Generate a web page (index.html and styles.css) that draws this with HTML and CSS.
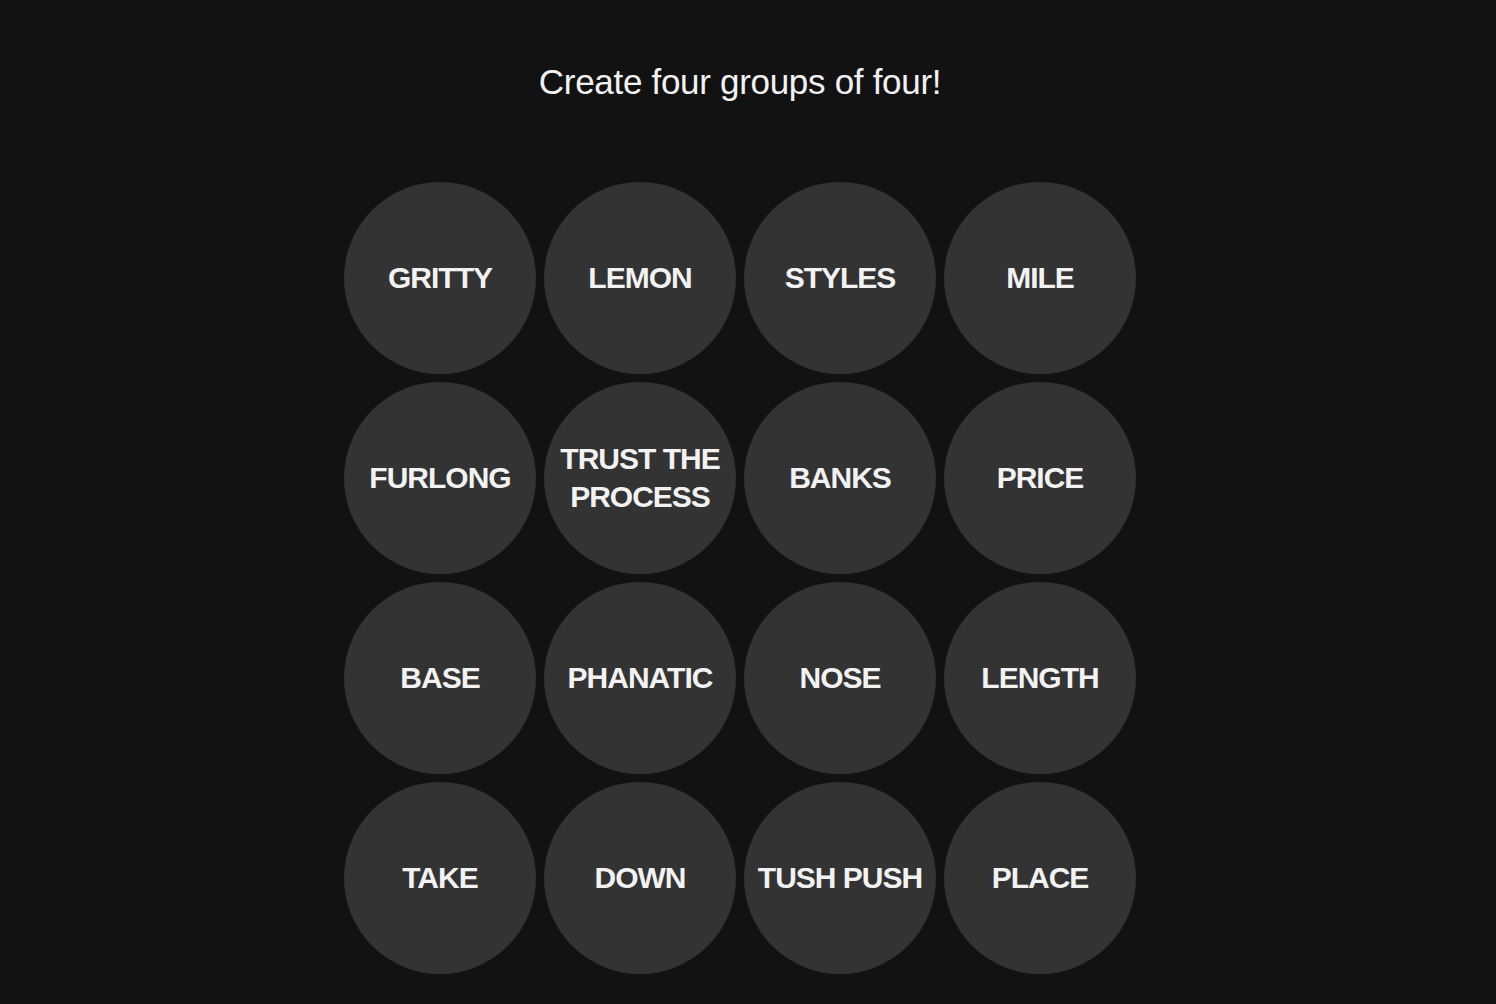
FILE: index.html
```html
<!DOCTYPE html>
<html lang="en">
<head>
    <meta charset="UTF-8">
    <meta name="viewport" content="width=device-width, initial-scale=1.0">
    <title>Connections</title>
    <link rel="stylesheet" href="styles.css">
</head>
<body>
    <main class="game">
        <h2 class="prompt">Create four groups of four!</h2>
        <div class="board">
            <button class="card">GRITTY</button>
            <button class="card">LEMON</button>
            <button class="card">STYLES</button>
            <button class="card">MILE</button>
            <button class="card">FURLONG</button>
            <button class="card">TRUST THE PROCESS</button>
            <button class="card">BANKS</button>
            <button class="card">PRICE</button>
            <button class="card">BASE</button>
            <button class="card">PHANATIC</button>
            <button class="card">NOSE</button>
            <button class="card">LENGTH</button>
            <button class="card">TAKE</button>
            <button class="card">DOWN</button>
            <button class="card">TUSH PUSH</button>
            <button class="card">PLACE</button>
        </div>
    </main>
</body>
</html>
```

FILE: styles.css
```css
body {
    margin: 0;
    background-color: #121212;
    color: #f2f2f2;
    font-family: "Liberation Sans", Arial, sans-serif;
}

.game {
    display: flex;
    flex-direction: column;
    align-items: center;
    padding: 0 16px 0 0;
}

.prompt {
    margin: 60px 0 0;
    font-size: 35px;
    font-weight: normal;
    line-height: 44px;
    letter-spacing: -0.3px;
}

.board {
    display: grid;
    grid-template-columns: repeat(4, 192px);
    grid-auto-rows: 192px;
    gap: 8px;
    margin-top: 78px;
}

.card {
    display: flex;
    align-items: center;
    justify-content: center;
    padding: 0 4px;
    border: none;
    border-radius: 50%;
    background-color: #333;
    color: #f2f2f2;
    font-family: "Liberation Sans", Arial, sans-serif;
    font-size: 30px;
    font-weight: bold;
    line-height: 38px;
    letter-spacing: -1px;
    text-align: center;
    cursor: pointer;
}
```
